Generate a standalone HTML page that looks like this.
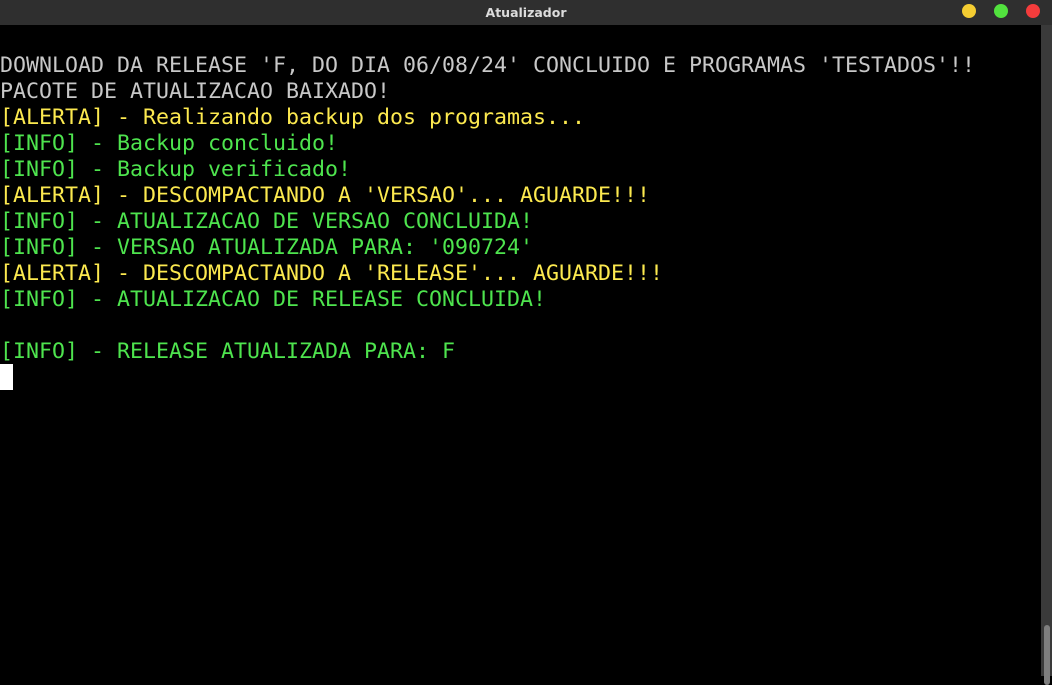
<!DOCTYPE html>
<html><head><meta charset="utf-8"><style>
html,body{margin:0;padding:0;background:#000;width:1052px;height:676px;overflow:hidden}
#tb{position:absolute;left:0;top:0;width:1052px;height:25px;background:#2f2f2f;}
#tt{position:absolute;left:0;width:1052px;top:5px;text-align:center;color:#dcdcdc;font:bold 12.5px "DejaVu Sans","Liberation Sans",sans-serif}
.dot{position:absolute;top:4px;width:14px;height:14px;border-radius:50%}
#term{position:absolute;left:0;top:53px;font-family:"DejaVu Sans Mono","Liberation Mono",monospace;font-size:21.6px;line-height:26px;white-space:pre;color:#c8c8c8}
.y{color:#fce94f}.g{color:#4ee44e}
#cur{position:absolute;left:0;top:364px;width:13px;height:26px;background:#fff}
#sb{position:absolute;left:1041px;top:25px;width:11px;height:651px;background:#3a3a3a}
#th{position:absolute;left:1044px;top:625px;width:6px;height:60px;border-radius:3px;background:#7e7e7e}
</style></head><body>
<div id="tb"><div id="tt">Atualizador</div>
<div class="dot" style="left:962px;background:#f4cd32"></div>
<div class="dot" style="left:994px;background:#52e23e"></div>
<div class="dot" style="left:1026px;background:#f43c3c"></div></div>
<div id="term">DOWNLOAD DA RELEASE 'F, DO DIA 06/08/24' CONCLUIDO E PROGRAMAS 'TESTADOS'!!
PACOTE DE ATUALIZACAO BAIXADO!
<span class="y">[ALERTA] - Realizando backup dos programas...</span>
<span class="g">[INFO] - Backup concluido!</span>
<span class="g">[INFO] - Backup verificado!</span>
<span class="y">[ALERTA] - DESCOMPACTANDO A 'VERSAO'... AGUARDE!!!</span>
<span class="g">[INFO] - ATUALIZACAO DE VERSAO CONCLUIDA!</span>
<span class="g">[INFO] - VERSAO ATUALIZADA PARA: '090724'</span>
<span class="y">[ALERTA] - DESCOMPACTANDO A 'RELEASE'... AGUARDE!!!</span>
<span class="g">[INFO] - ATUALIZACAO DE RELEASE CONCLUIDA!</span>

<span class="g">[INFO] - RELEASE ATUALIZADA PARA: F</span></div>
<div id="cur"></div>
<div id="sb"></div><div id="th"></div>
</body></html>
